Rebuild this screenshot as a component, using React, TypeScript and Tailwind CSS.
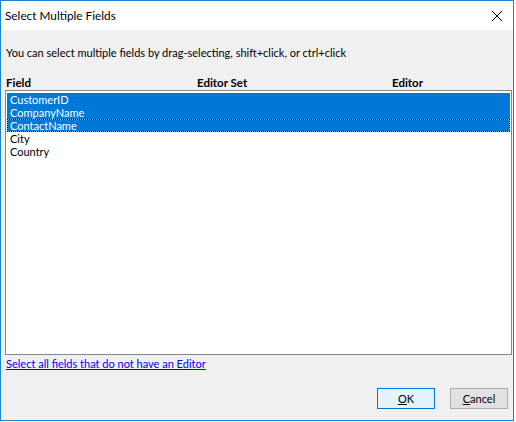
import React from 'react';

const rows = [
  { name: 'CustomerID', selected: true, focused: false },
  { name: 'CompanyName', selected: true, focused: false },
  { name: 'ContactName', selected: true, focused: true },
  { name: 'City', selected: false, focused: false },
  { name: 'Country', selected: false, focused: false },
];

export default function App() {
  return (
    <div className="w-[516px] h-[422px] bg-white font-['Lato',sans-serif] text-[11px] text-black">
      <div className="w-[514px] h-[421px] border border-[#1883d7] flex flex-col bg-[#f0f0f0]">
        {/* title bar */}
        <div className="h-[29px] bg-white flex items-center justify-between pl-[4px] pr-[9px] shrink-0">
          <span className="text-[11.8px] leading-none">Select Multiple Fields</span>
          <svg width="12" height="12" viewBox="0 0 12 12" className="mr-[1px]">
            <path d="M1 1L11 11M11 1L1 11" stroke="#000" strokeWidth="1" />
          </svg>
        </div>

        <div className="flex flex-col flex-1 px-[4px]">
          <p className="mt-[15px] ml-[1px] leading-[16px] h-[16px]">
            You can select multiple fields by drag-selecting, shift+click, or ctrl+click
          </p>

          <div className="mt-[15px] flex font-bold leading-[14px] h-[14px] ml-[1px] text-[11.5px]">
            <span className="w-[191px]">Field</span>
            <span className="w-[195px]">Editor Set</span>
            <span>Editor</span>
          </div>

          <div className="h-[265px] w-[507px] border border-[#828790] bg-white p-[1px] pt-[2px]">
            {rows.map((r) =>
              r.focused ? (
                <div key={r.name} className="h-[13px] border border-dotted border-black bg-[#e8962a]">
                  <div className="h-full bg-[#0078d7] text-white pl-[2px] leading-[11px]">{r.name}</div>
                </div>
              ) : (
                <div
                  key={r.name}
                  className={`h-[13px] pl-[3px] leading-[13px] ${r.selected ? 'bg-[#0078d7] text-white' : ''}`}
                >
                  {r.name}
                </div>
              )
            )}
          </div>

          <a href="#" className="mt-[1px] ml-[1px] text-[#0000ff] underline leading-[16px] w-fit">
            Select all fields that do not have an Editor
          </a>

          <div className="mt-[16px] flex justify-end gap-[15px] pr-[1px]">
            <button className="w-[58px] h-[21px] border border-[#0078d7] bg-[#e5f1fb] leading-none">
              <span className="underline">O</span>K
            </button>
            <button className="w-[58px] h-[21px] border border-[#adadad] bg-[#e1e1e1] leading-none">
              <span className="underline">C</span>ancel
            </button>
          </div>
        </div>
      </div>
    </div>
  );
}
